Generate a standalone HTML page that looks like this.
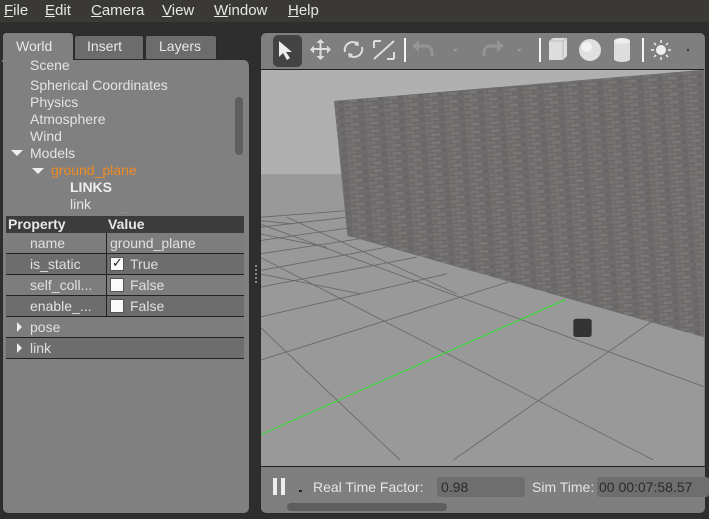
<!DOCTYPE html>
<html><head><meta charset="utf-8"><style>
*{margin:0;padding:0;box-sizing:border-box}
body{width:709px;height:519px;background:#2e2e2e;font-family:"Liberation Sans","DejaVu Sans",sans-serif;font-size:14px;color:#ddd;position:relative;overflow:hidden}
.a{position:absolute;white-space:nowrap}
.t{color:#e6e6e6;font-size:14px}
.row{position:absolute;left:6px;width:238px;height:21px;border-bottom:1px solid #222}
.row span{position:absolute;top:2px;font-size:14px;color:#e0e0e0}
.cb{position:absolute;left:110px;top:3px;width:14px;height:14px;background:#fafafa;border:1px solid #555}
</style></head><body>
<div class="a" style="left:0;top:0;width:709px;height:22px;background:#3a3935"></div>
<div class="a t" style="left:4px;top:2px;font-size:15px"><u>F</u>ile</div>
<div class="a t" style="left:45px;top:2px;font-size:15px"><u>E</u>dit</div>
<div class="a t" style="left:91px;top:2px;font-size:15px"><u>C</u>amera</div>
<div class="a t" style="left:162px;top:2px;font-size:15px"><u>V</u>iew</div>
<div class="a t" style="left:214px;top:2px;font-size:15px"><u>W</u>indow</div>
<div class="a t" style="left:288px;top:2px;font-size:15px"><u>H</u>elp</div>

<div class="a" style="left:2px;top:32px;width:72px;height:30px;background:#808080;border-radius:4px 4px 0 0;border:1px solid #2a2a2a;border-bottom:none"></div>
<div class="a" style="left:74px;top:35px;width:70px;height:25px;background:#6c6c6c;border:1px solid #2a2a2a;border-radius:3px 3px 0 0"></div>
<div class="a" style="left:145px;top:35px;width:72px;height:25px;background:#6c6c6c;border:1px solid #2a2a2a;border-radius:3px 3px 0 0"></div>
<div class="a" style="left:16px;top:38px;color:#e8e8e8">World</div>
<div class="a" style="left:87px;top:38px;color:#e8e8e8">Insert</div>
<div class="a" style="left:159px;top:38px;color:#e8e8e8">Layers</div>
<div class="a" style="left:2px;top:60px;width:248px;height:454px;background:#808080;border-radius:0 6px 6px 6px;border:1px solid #2a2a2a;border-top:none"></div>
<div class="a" style="left:2px;top:60px;width:72px;height:2px;background:#808080"></div>

<div class="a" style="left:30px;top:60px;color:#e4e4e4;height:14px;overflow:hidden;"><div style="margin-top:-3px">Scene</div></div>
<div class="a" style="left:30px;top:77px;color:#e4e4e4">Spherical Coordinates</div>
<div class="a" style="left:30px;top:94px;color:#e4e4e4">Physics</div>
<div class="a" style="left:30px;top:111px;color:#e4e4e4">Atmosphere</div>
<div class="a" style="left:30px;top:128px;color:#e4e4e4">Wind</div>
<div class="a" style="left:11px;top:150px;width:0;height:0;border-left:6px solid transparent;border-right:6px solid transparent;border-top:6px solid #eee"></div>
<div class="a" style="left:30px;top:145px;color:#e4e4e4">Models</div>
<div class="a" style="left:32px;top:168px;width:0;height:0;border-left:6px solid transparent;border-right:6px solid transparent;border-top:6px solid #eee"></div>
<div class="a" style="left:51px;top:162px;color:#f08a24">ground_plane</div>
<div class="a" style="left:70px;top:179px;color:#eee;font-weight:bold">LINKS</div>
<div class="a" style="left:70px;top:196px;color:#e4e4e4">link</div>
<div class="a" style="left:235px;top:97px;width:8px;height:58px;background:#5e5e5e;border-radius:4px"></div>
<div class="a" style="left:119px;top:209px;color:#bbb;font-size:6px">......</div>

<div class="a" style="left:6px;top:216px;width:238px;height:17px;background:#3c3c3c"></div>
<div class="a" style="left:8px;top:216px;color:#e8e8e8;font-weight:bold">Property</div>
<div class="a" style="left:108px;top:216px;color:#e8e8e8;font-weight:bold">Value</div>
<div class="row" style="top:233px;background:#7d7d7d"><span style="left:24px">name</span><span style="left:104px">ground_plane</span></div>
<div class="row" style="top:254px;background:#6d6d6d"><span style="left:24px">is_static</span><div class="cb" style="left:104px"></div><span style="left:106px;top:1px;color:#222;font-size:13px">✓</span><span style="left:124px">True</span></div>
<div class="row" style="top:275px;background:#7d7d7d"><span style="left:24px">self_coll...</span><div class="cb" style="left:104px"></div><span style="left:124px">False</span></div>
<div class="row" style="top:296px;background:#6d6d6d"><span style="left:24px">enable_...</span><div class="cb" style="left:104px"></div><span style="left:124px">False</span></div>
<div class="a" style="left:106px;top:233px;width:1px;height:84px;background:#222"></div>
<div class="row" style="top:317px;background:#7d7d7d"><span style="left:24px">pose</span></div>
<div class="row" style="top:338px;background:#6d6d6d"><span style="left:24px">link</span></div>
<div class="a" style="left:17px;top:322px;width:0;height:0;border-top:5px solid transparent;border-bottom:5px solid transparent;border-left:5px solid #eee"></div>
<div class="a" style="left:17px;top:343px;width:0;height:0;border-top:5px solid transparent;border-bottom:5px solid transparent;border-left:5px solid #eee"></div>
<div class="a" style="left:255px;top:265px;width:3px;height:18px;border-left:2px dotted #888"></div>

<div class="a" style="left:260px;top:32px;width:446px;height:482px;background:#7f7f7f;border-radius:6px;border:1px solid #2a2a2a"></div>
<div class="a" style="left:273px;top:35px;width:29px;height:32px;background:#434343;border-radius:5px"></div>
<svg class="a" style="left:260px;top:30px" width="449" height="40" viewBox="0 0 449 40">
<path d="M19 11 L19 27 L23 23 L27 30 L30 28 L26 22 L32 22 Z" fill="#eee"/>
<g fill="#ddd" stroke="#ddd"><path d="M52 19 H69 M60.5 11 V28" stroke-width="2"/>
<path d="M60.5 9 l-4 4 h8z M60.5 30 l-4 -4 h8z M50 19.5 l4 -4 v8z M71 19.5 l-4 -4 v8z" stroke="none"/></g>
<path d="M85 22 a8 8 0 0 1 13 -8 M102 17 a8 8 0 0 1 -13 8" fill="none" stroke="#ddd" stroke-width="2"/>
<path d="M98 11 l1 5 -5 -1z M89 28 l-1 -5 5 1z" fill="#ddd"/>
<path d="M114 11 h7 M114 11 v7 M134 29 h-7 M134 29 v-7 M114 29 l20 -18" stroke="#ddd" stroke-width="2" fill="none"/>
<rect x="144" y="8" width="2" height="24" fill="#f5f5f5"/>
<path d="M158 16 h8 a6 6 0 0 1 6 6 v4" stroke="#949494" stroke-width="3" fill="none"/><path d="M152 16 l7 -6 v12z" fill="#949494"/>
<path d="M193 19 l5 0 -2.5 3z" fill="#999"/>
<path d="M238 16 h-8 a6 6 0 0 0 -6 6 v4" stroke="#949494" stroke-width="3" fill="none"/><path d="M244 16 l-7 -6 v12z" fill="#949494"/>
<path d="M257 19 l5 0 -2.5 3z" fill="#999"/>
<rect x="279" y="8" width="2" height="24" fill="#f5f5f5"/>
<path d="M289 11 l4 -3 h14 v18 l-4 4 h-14z" fill="#ddd"/><path d="M289 11 h14 l4 -3 M303 11 v19" stroke="#bbb" fill="none"/>
<circle cx="330" cy="20" r="11" fill="#e0e0e0"/><circle cx="327" cy="17" r="5" fill="#f3f3f3"/>
<path d="M354 11 v18 a8 3 0 0 0 16 0 v-18" fill="#ddd"/><ellipse cx="362" cy="11" rx="8" ry="3" fill="#eee"/>
<rect x="382" y="8" width="2" height="24" fill="#f5f5f5"/>
<circle cx="401" cy="20" r="5" fill="#eee"/>
<g stroke="#eee" stroke-width="1.5"><path d="M401 10 v3 M401 27 v3 M391 20 h3 M408 20 h3 M394 13 l2 2 M406 25 l2 2 M408 13 l-2 2 M394 27 l2 -2"/></g>
<rect x="427" y="19" width="2" height="2" fill="#333"/>
</svg>
<svg class="a" style="left:261px;top:69px;border-top:1px solid #222" width="443" height="397" viewBox="3 27 1329 1191" preserveAspectRatio="none">
<defs>
<pattern id="br" width="60" height="24" patternUnits="userSpaceOnUse" patternTransform="rotate(-4)">
<rect width="60" height="24" fill="#6b6968"/>
<rect x="2" y="2" width="26" height="8" fill="#777574"/><rect x="32" y="2" width="26" height="8" fill="#6f6d6c"/>
<rect x="-13" y="14" width="26" height="8" fill="#72706f"/><rect x="17" y="14" width="26" height="8" fill="#7a7877"/><rect x="47" y="14" width="26" height="8" fill="#686665"/>
</pattern>
</defs>
<rect x="0" y="0" width="1347" height="1300" fill="#999"/>
<polygon points="0,0 1347,0 1347,340 0,340" fill="#b0b0b0"/>
<g stroke="#666" stroke-width="2.5" fill="none">
<path d="M0 800 L420 1200"/><path d="M0 590 L1180 1200"/><path d="M0 490 L1347 985"/>
<path d="M0 900 L760 660"/><path d="M580 1200 L1180 780"/><path d="M0 770 L560 640"/>
<path d="M0 680 L470 590"/><path d="M0 630 L380 560"/><path d="M0 580 L330 530"/><path d="M0 540 L280 500"/><path d="M0 500 L260 470"/><path d="M0 470 L260 450"/>
<path d="M0 640 L300 700"/><path d="M0 520 L200 560"/><path d="M80 470 L590 700"/><path d="M0 480 L100 490"/>
</g>
<path d="M0 1125 L915 718" stroke="#2ce02c" stroke-width="3"/>
<polygon points="222,120 1347,25 1347,835 262,525" fill="url(#br)"/>
<g fill="#333"><rect x="940" y="775" width="55" height="55" rx="8"/></g>
</svg>
<div class="a" style="left:261px;top:466px;width:444px;height:1px;background:#222"></div>
<div class="a" style="left:273px;top:478px;width:4px;height:17px;background:#eee"></div>
<div class="a" style="left:281px;top:478px;width:4px;height:17px;background:#eee"></div>
<div class="a" style="left:299px;top:490px;width:3px;height:2px;background:#222"></div>
<div class="a" style="left:313px;top:479px;color:#e4e4e4">Real Time Factor:</div>
<div class="a" style="left:437px;top:477px;width:88px;height:20px;background:#6e6e6e;border-radius:3px"></div>
<div class="a" style="left:441px;top:479px;color:#2a2a2a">0.98</div>
<div class="a" style="left:532px;top:479px;color:#e4e4e4">Sim Time:</div>
<div class="a" style="left:597px;top:477px;width:112px;height:20px;background:#6e6e6e;border-radius:3px"></div>
<div class="a" style="left:599px;top:479px;color:#2a2a2a">00 00:07:58.57</div>
<div class="a" style="left:287px;top:503px;width:160px;height:8px;background:#5e5e5e;border-radius:4px"></div>
</body></html>
